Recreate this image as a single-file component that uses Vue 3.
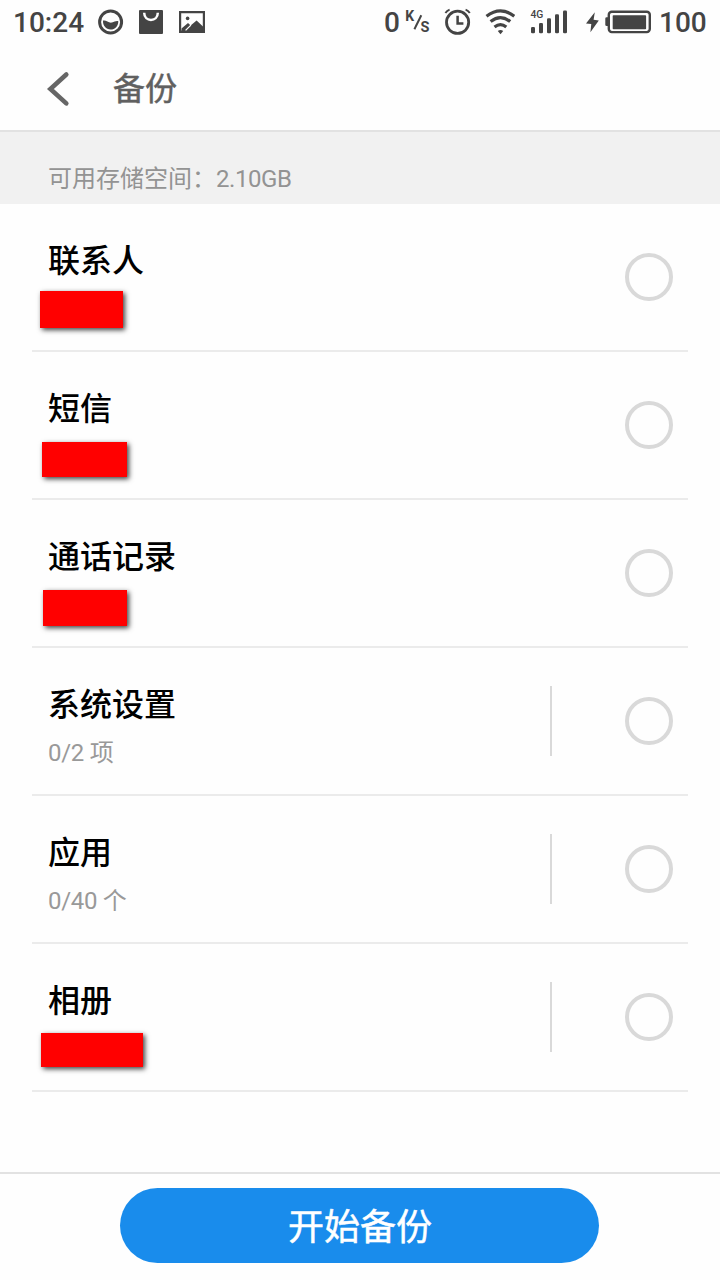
<script setup>
import { ref } from 'vue'

const items = ref([
  { title: '联系人', mask: { x: 40, y: 87, w: 83, h: 37 } },
  { title: '短信', mask: { x: 42, y: 90, w: 84.5, h: 35 } },
  { title: '通话记录', mask: { x: 43, y: 90, w: 84, h: 36 } },
  { title: '系统设置', detail: '0/2 项', expandable: true },
  { title: '应用', detail: '0/40 个', expandable: true },
  { title: '相册', mask: { x: 41, y: 89, w: 102, h: 34 }, expandable: true }
])

const maskStyle = (m) => ({
  left: m.x + 'px',
  top: m.y + 'px',
  width: m.w + 'px',
  height: m.h + 'px'
})
</script>

<template>
  <div class="screen">
    <div class="status">
      <div class="group">
        <span class="clock">10:24</span>
        <svg class="face" width="26" height="44" viewBox="98 0 26 44">
          <circle cx="110.6" cy="22" r="11" fill="none" stroke="#444" stroke-width="3" />
          <path d="M103 20.6C106 19.6 108.6 23.4 112 22.5C114.4 21.8 116 20.7 118.3 21.2C118.4 26 115 29.5 110.6 29.5C106 29.5 102.6 25.5 103 20.6Z" fill="#444" />
        </svg>
        <svg class="bag" width="24" height="44" viewBox="139 0 24 44">
          <rect x="139" y="10" width="24" height="24" rx="1" fill="#444" />
          <path d="M144.2 12.8C144.2 22.4 157.8 22.4 157.8 12.8" fill="none" stroke="#fff" stroke-width="2.5" />
        </svg>
        <svg class="photo" width="26" height="44" viewBox="179 0 26 44">
          <path fill-rule="evenodd" d="M179 11H205V33H179ZM181.2 13.2V30.4H202.8V13.2Z" fill="#444" />
          <path d="M181.5 28.6L188 22.9L190.6 25.6L196.6 20.4L203 26.4V31H181.5Z" fill="#444" />
          <path d="M185.6 30.4L190.9 25.1" stroke="#fff" stroke-width="1.3" />
          <circle cx="187.6" cy="18.4" r="1.8" fill="#444" />
        </svg>
      </div>
      <div class="group">
        <span class="speed">0</span>
        <svg class="unit" width="26" height="44" viewBox="405 0 26 44">
          <text x="405.2" y="21.3" font-size="14">K</text>
          <path d="M414.4 29.3L421.3 15.2" stroke="#444" stroke-width="2" />
          <text x="420.4" y="32.2" font-size="14.5">S</text>
        </svg>
        <svg class="alarm" width="28" height="44" viewBox="444 0 28 44">
          <g fill="none" stroke="#444">
            <circle cx="457.6" cy="22.3" r="11.1" stroke-width="2.8" />
            <path d="M457.6 15.8V23.4H463.4" stroke-width="2.5" />
            <path d="M445.4 13.1Q447 10.6 449.6 9.7M465.6 9.7Q468.2 10.6 469.8 13.1" stroke-width="1.9" />
          </g>
        </svg>
        <svg class="wifi" width="30" height="44" viewBox="485 0 30 44">
          <g fill="none" stroke="#444" stroke-width="3.2">
            <path d="M486.5 16.2Q500.5 5.6 514.3 16.2" />
            <path d="M490.6 21.6Q500.5 13.6 510.2 21.6" />
            <path d="M494.5 26.9Q500.5 22.3 506.3 26.9" />
          </g>
          <path d="M497.8 31Q500.5 28.8 503.2 31L500.5 34.3Z" fill="#444" />
        </svg>
        <svg class="signal" width="38" height="44" viewBox="530 0 38 44">
          <text x="530.5" y="18" font-size="10.3">4G</text>
          <g fill="#444">
            <rect x="531" y="27" width="4" height="6.3" rx="1.2" />
            <rect x="539" y="23" width="4" height="10.3" rx="1.2" />
            <rect x="547" y="18.3" width="4" height="15" rx="1.2" />
            <rect x="555" y="14.3" width="4" height="19" rx="1.2" />
            <rect x="563" y="10.6" width="4" height="22.7" rx="1.2" />
          </g>
        </svg>
        <svg class="battery" width="66" height="44" viewBox="586 0 66 44">
          <path d="M594.8 12.3L586 23.5L591.3 24.1L590.4 32.2L598.8 20.4L593.6 19.8Z" fill="#444" />
          <rect x="605.3" y="17.3" width="4" height="8.8" rx="1.4" fill="#444" />
          <rect x="608.8" y="11.8" width="41" height="20.3" rx="3" fill="none" stroke="#444" stroke-width="2.4" />
          <rect x="612.7" y="15.2" width="33.4" height="14" rx=".8" fill="#444" />
        </svg>
        <span class="level">100</span>
      </div>
    </div>

    <header class="bar">
      <svg class="back" width="24" height="36" viewBox="46 71 24 36">
        <path d="M66.3 74.5L50.4 89L66.3 103.4" fill="none" stroke="#666" stroke-width="4.6" stroke-linecap="round" stroke-linejoin="miter" />
      </svg>
      <h1 class="heading">备份</h1>
    </header>

    <div class="storage">可用存储空间：<span class="size">2.10GB</span></div>

    <ul class="list">
      <li v-for="item in items" :key="item.title" class="row">
        <div class="label">
          <div class="title">{{ item.title }}</div>
          <div v-if="item.detail" class="detail">{{ item.detail }}</div>
        </div>
        <span v-if="item.expandable" class="divider"></span>
        <span class="radio"></span>
        <span v-if="item.mask" class="mask" :style="maskStyle(item.mask)"></span>
      </li>
    </ul>

    <footer class="footer">
      <button class="start">开始备份</button>
    </footer>
  </div>
</template>

<style>
body {
  margin: 0;
  background: #fefefe;
}
</style>

<style scoped>
.screen {
  width: 720px;
  height: 1280px;
  display: flex;
  flex-direction: column;
  background: #fefefe;
  font-family: Roboto, "Noto Sans CJK SC", sans-serif;
  overflow: hidden;
}
.status {
  height: 44px;
  flex: none;
  display: flex;
  justify-content: space-between;
  padding: 0 13px;
  color: #444;
  font-size: 28px;
  font-weight: 500;
  line-height: 45px;
}
.group {
  display: flex;
}
.group svg {
  flex: none;
  display: block;
}
.group text {
  fill: #444;
}
.unit text {
  font-weight: 700;
}
.clock {
  width: 85px;
}
.bag {
  margin-left: 15px;
}
.photo {
  margin-left: 16px;
}
.speed {
  width: 21px;
}
.alarm {
  margin-left: 13px;
}
.wifi {
  margin-left: 13px;
}
.signal {
  margin-left: 15px;
}
.battery {
  margin-left: 18px;
}
.level {
  margin-left: 7px;
  width: 48px;
}
.bar {
  height: 88px;
  flex: none;
  box-sizing: border-box;
  display: flex;
  align-items: center;
  padding-left: 46px;
  border-bottom: 2px solid #e2e2e2;
}
.back {
  margin-top: 4px;
}
.heading {
  margin: 4px 0 0 43px;
  color: #606060;
  font-size: 32px;
  line-height: 48px;
  font-weight: 400;
  -webkit-text-stroke: 0.5px #606060;
}
.storage {
  height: 72px;
  flex: none;
  box-sizing: border-box;
  padding: 29px 0 0 48px;
  background: #f1f1f1;
  color: #939393;
  font-size: 24px;
  line-height: 36px;
}
.size {
  letter-spacing: -0.45px;
}
.list {
  flex: 1;
  margin: 0;
  padding: 0;
  list-style: none;
}
.row {
  position: relative;
  height: 148px;
  box-sizing: border-box;
  display: flex;
  align-items: center;
  padding: 0 47px 0 48px;
}
.row::after {
  content: "";
  position: absolute;
  left: 32px;
  right: 32px;
  bottom: 0;
  height: 2px;
  background: #ebebeb;
}
.label {
  flex: 1;
  align-self: flex-start;
  padding-top: 33px;
}
.title {
  color: #000;
  font-size: 32px;
  line-height: 49px;
  font-weight: 500;
}
.detail {
  margin-top: 5px;
  color: #999;
  font-size: 24px;
  line-height: 36px;
  letter-spacing: -0.3px;
}
.divider {
  width: 2px;
  height: 70px;
  margin: 0 73px 2px 0;
  background: #d9d9d9;
}
.radio {
  width: 48px;
  height: 48px;
  margin-bottom: 2px;
  box-sizing: border-box;
  border: 4px solid #d9d9d9;
  border-radius: 50%;
}
.mask {
  position: absolute;
  background: #f00;
  box-shadow: 2px 2px 5px rgba(0, 0, 0, 0.75);
}
.footer {
  height: 108px;
  flex: none;
  box-sizing: border-box;
  border-top: 2px solid #e2e2e2;
  padding: 14px 0 0 120px;
}
.start {
  display: block;
  width: 479px;
  height: 75px;
  padding: 5px 0 0 1px;
  border: 0;
  border-radius: 38px;
  background: #198cec;
  color: #fff;
  font-family: inherit;
  font-size: 36px;
  line-height: 70px;
  font-weight: 400;
  -webkit-text-stroke: 0.5px #fff;
}
</style>
